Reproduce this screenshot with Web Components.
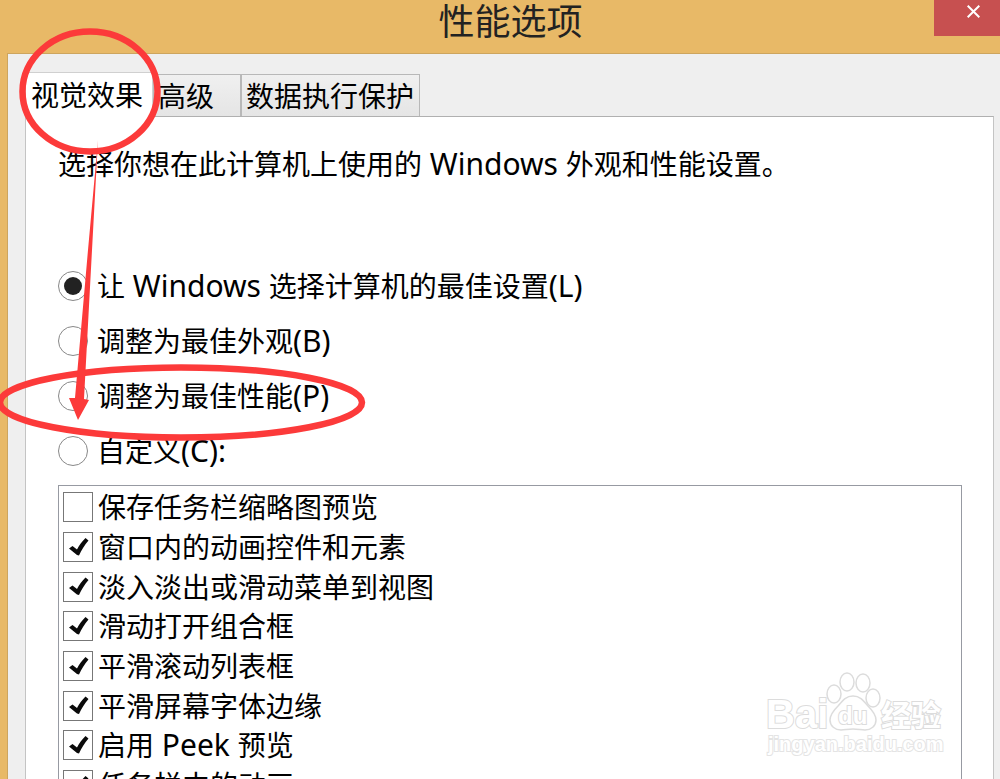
<!DOCTYPE html>
<html lang="zh-CN">
<head>
<meta charset="utf-8">
<meta name="viewport" content="width=device-width, initial-scale=1">
<title>性能选项</title>
<style>
  body {
    margin: 0;
    overflow: hidden;
    color: #000;
    font: 28px/40px "Noto Sans", "Noto Sans CJK SC", sans-serif;
  }
  .latin {
    font-size: 30px;
  }
</style>
</head>
<body>
<option-window heading="性能选项">
  <tab-strip>
    <tab-item selected>视觉效果</tab-item>
    <tab-item>高级</tab-item>
    <tab-item>数据执行保护</tab-item>
  </tab-strip>
  <tab-panel>
    <span slot="intro">选择你想在此计算机上使用的<span class="latin"> Windows </span>外观和性能设置。</span>
    <choice-item checked>让<span class="latin"> Windows </span>选择计算机的最佳设置<span class="latin">(L)</span></choice-item>
    <choice-item>调整为最佳外观<span class="latin">(B)</span></choice-item>
    <choice-item>调整为最佳性能<span class="latin">(P)</span></choice-item>
    <choice-item>自定义<span class="latin">(C):</span></choice-item>
    <effect-list slot="effects">
      <check-item>保存任务栏缩略图预览</check-item>
      <check-item checked>窗口内的动画控件和元素</check-item>
      <check-item checked>淡入淡出或滑动菜单到视图</check-item>
      <check-item checked>滑动打开组合框</check-item>
      <check-item checked>平滑滚动列表框</check-item>
      <check-item checked>平滑屏幕字体边缘</check-item>
      <check-item checked>启用<span class="latin"> Peek </span>预览</check-item>
      <check-item checked>任务栏中的动画</check-item>
    </effect-list>
  </tab-panel>
</option-window>
<site-mark></site-mark>
<hand-marks></hand-marks>

<script>
/**
 * Base for all elements: renders the static markup into an open root.
 */
class BaseElement extends HTMLElement {
  constructor() {
    super();

    const template = document.createElement('template');
    template.innerHTML = this.constructor.markup;
    this.attachShadow({mode: 'open'});
    this.shadowRoot.appendChild(template.content.cloneNode(true));
  }
}


class OptionWindow extends BaseElement {
  static get markup() {
    return `
      <style>
        :host {
          display: flex;
          flex-direction: column;
          box-sizing: border-box;
          height: 100vh;
          padding-left: 7px;
          overflow: hidden;
          background: #e8b967;
        }
        header {
          display: grid;
          flex: none;
          grid-template-columns: 1fr auto;
          height: 53px;
        }
        h1 {
          grid-area: 1 / 1 / 2 / 3;
          margin: 0;
          padding-left: 14px;
          color: #222;
          font-size: 36px;
          font-weight: 400;
          line-height: 44px;
          text-align: center;
        }
        button {
          display: flex;
          grid-area: 1 / 2;
          align-items: flex-start;
          height: 36px;
          margin: 0;
          padding: 5px 20px 0 33px;
          border: 0;
          background: #c75050;
        }
        main {
          display: flex;
          flex: 1;
          flex-direction: column;
          min-height: 0;
          padding: 18px 6px 0 17px;
          border: solid #cda55e;
          border-width: 1px 0 0 1px;
          background: #efefef;
        }
      </style>
      <header>
        <h1></h1>
        <button type="button" aria-label="关闭">
          <svg width="13" height="13" viewBox="0 0 13 13" fill="none" stroke="#fff" stroke-width="2">
            <path d="M.7 .7l11.6 11.6M12.3 .7L.7 12.3"/>
          </svg>
        </button>
      </header>
      <main><slot></slot></main>
    `;
  }

  connectedCallback() {
    this.shadowRoot.querySelector('h1').textContent =
        this.getAttribute('heading');
  }
}


class TabStrip extends BaseElement {
  static get markup() {
    return `
      <style>
        :host {
          display: flex;
          flex: none;
          align-items: flex-end;
          height: 44px;
        }
      </style>
      <slot></slot>
    `;
  }

  connectedCallback() {
    this.setAttribute('role', 'tablist');
  }
}


class TabItem extends BaseElement {
  static get markup() {
    return `
      <style>
        :host {
          display: block;
        }
        button {
          display: block;
          box-sizing: border-box;
          min-width: 88px;
          height: 42px;
          margin: 0;
          padding: 0 5px 0 4px;
          border: 1px solid #b8b8b8;
          border-width: 1px 1px 0 1px;
          background: linear-gradient(#f0f0f0, #e5e5e5);
          color: inherit;
          font: inherit;
          text-align: left;
        }
        :host([selected]) {
          position: relative;
          margin-bottom: -1px;
        }
        :host([selected]) button {
          min-width: 128px;
          height: 45px;
          padding: 0 5px;
          border-color: #d0d0d0;
          background: #fff;
        }
      </style>
      <button type="button" role="tab"><slot></slot></button>
    `;
  }

  connectedCallback() {
    this.shadowRoot.querySelector('button')
        .setAttribute('aria-selected', String(this.hasAttribute('selected')));
  }
}


class TabPanel extends BaseElement {
  static get markup() {
    return `
      <style>
        :host {
          display: block;
          flex: 1;
          min-height: 0;
          padding: 27px 31px 0 32px;
          border: 1px solid #c4c4c4;
          border-top-color: #b0b0b0;
          border-bottom: 0;
          background: #fff;
        }
        p {
          margin: 0;
        }
        fieldset {
          min-width: 0;
          margin: 74px 0 7px;
          padding: 0;
          border: 0;
        }
      </style>
      <p><slot name="intro"></slot></p>
      <fieldset><slot></slot></fieldset>
      <slot name="effects"></slot>
    `;
  }

  connectedCallback() {
    // Radios live in separate shadow roots, so the group is kept here.
    this.addEventListener('choice', ({target}) => {
      this.querySelectorAll('choice-item').forEach(item => {
        item.input.checked = item === target;
      });
    });
  }
}


class ChoiceItem extends BaseElement {
  static get markup() {
    return `
      <style>
        :host {
          display: block;
        }
        label {
          display: flex;
          gap: 9px;
          align-items: center;
          height: 55px;
        }
        input {
          display: grid;
          flex: none;
          place-items: center;
          box-sizing: border-box;
          width: 30px;
          height: 30px;
          margin: 0;
          border: 1px solid #888;
          border-radius: 50%;
          background: #fff;
          appearance: none;
        }
        input:checked::before {
          width: 18px;
          height: 18px;
          border-radius: 50%;
          background: #222;
          content: '';
        }
      </style>
      <label><input type="radio"><span><slot></slot></span></label>
    `;
  }

  get input() {
    return this.shadowRoot.querySelector('input');
  }

  connectedCallback() {
    this.input.checked = this.hasAttribute('checked');
    this.input.addEventListener('change', () => {
      this.dispatchEvent(new CustomEvent('choice', {bubbles: true}));
    });
  }
}


class EffectList extends BaseElement {
  static get markup() {
    return `
      <style>
        :host {
          display: grid;
          grid-auto-rows: 40px 40px 39px;
          padding: 1px 4px;
          border: 1px solid #979aa2;
        }
      </style>
      <slot></slot>
    `;
  }
}


class CheckItem extends BaseElement {
  static get markup() {
    return `
      <style>
        :host {
          display: block;
        }
        label {
          display: flex;
          gap: 5px;
          align-items: center;
          height: 100%;
        }
        input {
          flex: none;
          box-sizing: border-box;
          width: 30px;
          height: 30px;
          margin: 0;
          border: 1px solid #777;
          background: #fff;
          appearance: none;
        }
        input:checked::before {
          display: block;
          width: 28px;
          height: 28px;
          background: #0a0a0a;
          clip-path: path('M5 15.5L8.5 13L13 16.5C15 12.5 18 8.5 21.5 5L24.500 7.500C20.500 12 17.500 17 15 22.500L13 22Z');
          content: '';
        }
      </style>
      <label><input type="checkbox"><span><slot></slot></span></label>
    `;
  }

  connectedCallback() {
    this.shadowRoot.querySelector('input').checked =
        this.hasAttribute('checked');
  }
}


/** Outlined site logo in the lower right corner. */
class SiteMark extends BaseElement {
  static get markup() {
    return `
      <style>
        :host {
          position: absolute;
          right: 50px;
          bottom: 17px;
          pointer-events: none;
        }
        svg {
          display: block;
        }
        text {
          font-family: "Liberation Sans", "Noto Sans CJK SC", sans-serif;
          font-weight: 700;
          paint-order: stroke;
        }
      </style>
      <svg width="184" height="92" viewBox="0 0 184 92" fill="#fff" stroke="#dcdcdc" stroke-width="2">
        <text x="0" y="58" font-size="40">Bai</text>
        <g stroke-width="1.5">
          <ellipse cx="68" cy="24" rx="7" ry="9"/>
          <ellipse cx="81" cy="12" rx="7" ry="9"/>
          <ellipse cx="97" cy="13" rx="7" ry="9"/>
          <ellipse cx="107" cy="28" rx="7" ry="9"/>
          <path d="M87 26c7 0 10 4 15 10 5 5 8 9 8 14 0 6-5 10-11 10-4 0-7-1-12-1s-8 1-12 1c-6 0-11-4-11-10 0-5 3-9 8-14 5-6 8-10 15-10z"/>
        </g>
        <text x="72" y="54" font-size="24">du</text>
        <text x="115" y="56" font-size="30">经验</text>
        <text x="2" y="81" font-size="20" stroke="#e4e4e4">jingyan.baidu.com</text>
      </svg>
    `;
  }
}


/** Red rings and the arrow drawn over the window. */
class HandMarks extends BaseElement {
  static get markup() {
    return `
      <style>
        :host {
          position: absolute;
          top: 0;
          left: 0;
          pointer-events: none;
        }
        svg {
          display: block;
        }
      </style>
      <svg width="370" height="450" viewBox="0 0 370 450" fill="none" stroke="#fc3a3a" stroke-width="6.5">
        <ellipse cx="90" cy="91.5" rx="67.5" ry="60"/>
        <ellipse cx="181" cy="402.5" rx="181" ry="35"/>
        <path d="M98 140L92 250L84 399L89 400L78 420L69 398L75 398L88 250Z" fill="#fc3a3a" stroke="none"/>
      </svg>
    `;
  }
}


window.customElements.define('option-window', OptionWindow);
window.customElements.define('tab-strip', TabStrip);
window.customElements.define('tab-item', TabItem);
window.customElements.define('tab-panel', TabPanel);
window.customElements.define('choice-item', ChoiceItem);
window.customElements.define('effect-list', EffectList);
window.customElements.define('check-item', CheckItem);
window.customElements.define('site-mark', SiteMark);
window.customElements.define('hand-marks', HandMarks);
</script>
</body>
</html>
